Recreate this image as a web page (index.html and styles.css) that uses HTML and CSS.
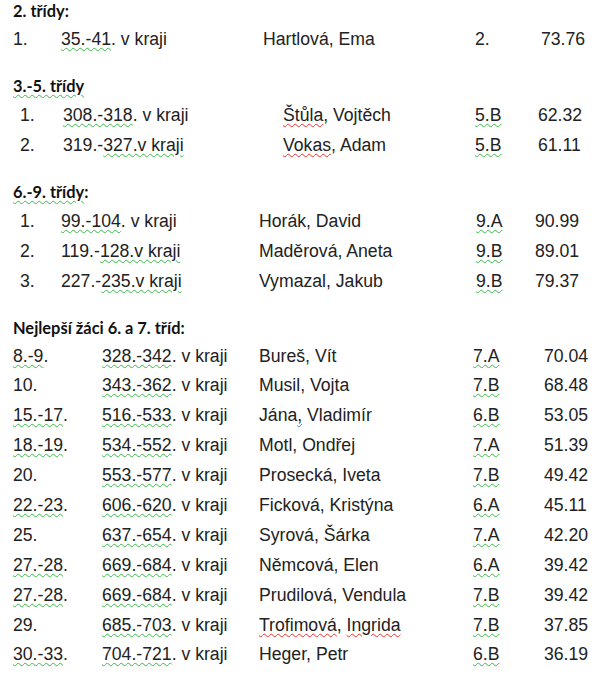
FILE: index.html
```html
<!DOCTYPE html>
<html lang="cs">
<head>
<meta charset="utf-8">
<title>Výsledky</title>
<link rel="stylesheet" href="styles.css">
</head>
<body>
<div class="page">
  <section class="sec s1">
    <h2 class="head">2. třídy:</h2>
    <div class="row"><span>1.</span><span><u class="g">35.-41</u>. v kraji</span><span>Hartlová, Ema</span><span>2.</span><span>73.76</span></div>
  </section>

  <section class="sec s2">
    <h2 class="head"><u class="g">3.-5. třídy</u></h2>
    <div class="row"><span>1.</span><span><u class="g">308.-318</u>. v kraji</span><span><u class="r">Štůla</u>, Vojtěch</span><span><u class="g">5.B</u></span><span>62.32</span></div>
    <div class="row"><span>2.</span><span>319.-<u class="g">327.v kraji</u></span><span><u class="r">Vokas</u>, Adam</span><span><u class="g">5.B</u></span><span>61.11</span></div>
  </section>

  <section class="sec s3">
    <h2 class="head"><u class="g">6.-9. třídy</u>:</h2>
    <div class="row"><span>1.</span><span><u class="g">99.-104</u>. v kraji</span><span>Horák, David</span><span><u class="g">9.A</u></span><span>90.99</span></div>
    <div class="row"><span>2.</span><span>119.-<u class="g">128.v kraji</u></span><span>Maděrová, Aneta</span><span><u class="g">9.B</u></span><span>89.01</span></div>
    <div class="row"><span>3.</span><span>227.-<u class="g">235.v kraji</u></span><span>Vymazal, Jakub</span><span><u class="g">9.B</u></span><span>79.37</span></div>
  </section>

  <section class="sec s4">
    <h2 class="head">Nejlepší žáci 6. a 7. tříd:</h2>
    <div class="row"><span><u class="g">8.-9</u>.</span><span><u class="g">328.-342</u>. v kraji</span><span>Bureš, Vít</span><span><u class="g">7.A</u></span><span>70.04</span></div>
    <div class="row"><span>10.</span><span><u class="g">343.-362</u>. v kraji</span><span>Musil, Vojta</span><span><u class="g">7.B</u></span><span>68.48</span></div>
    <div class="row"><span><u class="g">15.-17</u>.</span><span><u class="g">516.-533</u>. v kraji</span><span>Jána<u class="b">,</u> Vladimír</span><span><u class="g">6.B</u></span><span>53.05</span></div>
    <div class="row"><span><u class="g">18.-19</u>.</span><span><u class="g">534.-552</u>. v kraji</span><span>Motl, Ondřej</span><span><u class="g">7.A</u></span><span>51.39</span></div>
    <div class="row"><span>20.</span><span><u class="g">553.-577</u>. v kraji</span><span>Prosecká, Iveta</span><span><u class="g">7.B</u></span><span>49.42</span></div>
    <div class="row"><span><u class="g">22.-23</u>.</span><span><u class="g">606.-620</u>. v kraji</span><span>Ficková, Kristýna</span><span><u class="g">6.A</u></span><span>45.11</span></div>
    <div class="row"><span>25.</span><span><u class="g">637.-654</u>. v kraji</span><span>Syrová, Šárka</span><span><u class="g">7.A</u></span><span>42.20</span></div>
    <div class="row"><span><u class="g">27.-28</u>.</span><span><u class="g">669.-684</u>. v kraji</span><span>Němcová, Elen</span><span><u class="g">6.A</u></span><span>39.42</span></div>
    <div class="row"><span><u class="g">27.-28</u>.</span><span><u class="g">669.-684</u>. v kraji</span><span>Prudilová, Vendula</span><span><u class="g">7.B</u></span><span>39.42</span></div>
    <div class="row"><span>29.</span><span><u class="g">685.-703</u>. v kraji</span><span><u class="r">Trofimová</u>, <u class="r">Ingrida</u></span><span><u class="g">7.B</u></span><span>37.85</span></div>
    <div class="row"><span><u class="g">30.-33</u>.</span><span><u class="g">704.-721</u>. v kraji</span><span>Heger, Petr</span><span><u class="g">6.B</u></span><span>36.19</span></div>
  </section>
</div>
</body>
</html>
```

FILE: styles.css
```css
html, body {
  margin: 0;
  padding: 0;
  background: #ffffff;
}

.page {
  width: 604px;
  padding-top: 1px;
  color: #222222;
  font-family: "Liberation Sans", Arial, sans-serif;
}

.sec {
  margin-bottom: 22px;
}

.head {
  margin: 0 0 4px 0;
  padding-left: 13px;
  font-family: Lato, "Open Sans", sans-serif;
  font-weight: bold;
  font-size: 16.4px;
  line-height: 20px;
  color: #111111;
}

.s1 .head {
  margin-bottom: 2.5px;
}

.row {
  display: grid;
  height: 30px;
  font-size: 17.65px;
  line-height: 30px;
  white-space: nowrap;
}

.row > span {
  display: block;
}

.s1 .row {
  padding-left: 13px;
  grid-template-columns: 48px 202px 212px 66px auto;
}

.s2 .row {
  padding-left: 20px;
  grid-template-columns: 43px 220px 192px 63px auto;
}

.s3 .row {
  padding-left: 20px;
  grid-template-columns: 41px 198px 217px 59px auto;
}

.s4 .row {
  padding-left: 13px;
  height: 29.9px;
  line-height: 29.9px;
  grid-template-columns: 89px 157px 214px 71px auto;
}

u {
  text-decoration-line: underline;
  text-decoration-style: wavy;
  text-decoration-thickness: 1px;
  text-underline-offset: 1.5px;
}

u.g {
  text-decoration-color: #3cb84a;
}

u.r {
  text-decoration-color: #e8322f;
}

u.b {
  text-decoration-color: #4a7fe0;
}
```
